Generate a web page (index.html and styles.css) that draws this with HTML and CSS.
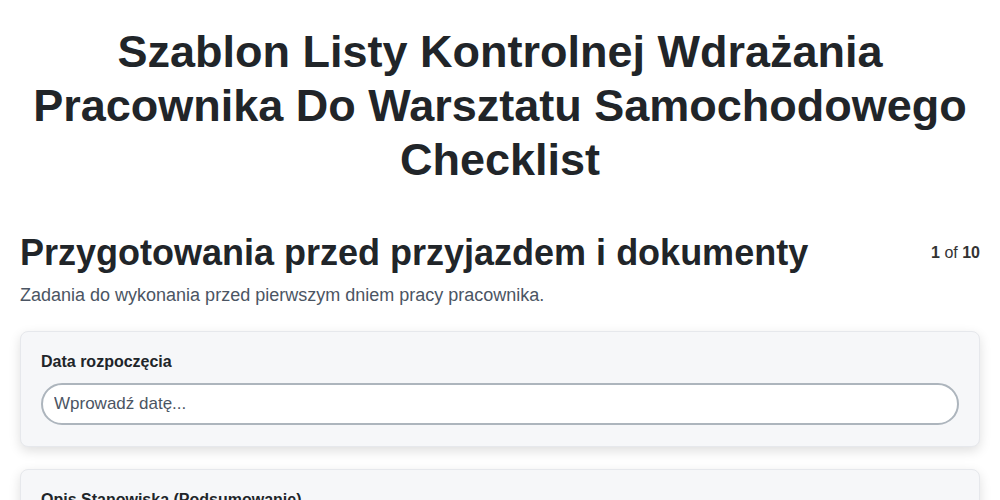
FILE: index.html
```html
<!DOCTYPE html>
<html lang="pl">
<head>
  <meta charset="UTF-8">
  <meta name="viewport" content="width=device-width, initial-scale=1.0">
  <title>Szablon Listy Kontrolnej</title>
  <link rel="stylesheet" href="styles.css">
</head>
<body>
  <div id="page">
    <h1 id="title">Szablon Listy Kontrolnej Wdrażania Pracownika Do Warsztatu Samochodowego Checklist</h1>

    <div class="section-head">
      <h2>Przygotowania przed przyjazdem i dokumenty</h2>
      <div class="counter"><b>1</b> of <b>10</b></div>
    </div>
    <p class="section-desc">Zadania do wykonania przed pierwszym dniem pracy pracownika.</p>

    <div class="card">
      <label class="field-label">Data rozpoczęcia</label>
      <input class="field-input" type="text" placeholder="Wprowadź datę...">
    </div>

    <div class="card">
      <label class="field-label">Opis Stanowiska (Podsumowanie)</label>
      <textarea class="field-input" placeholder="Wprowadź opis..."></textarea>
    </div>
  </div>
</body>
</html>
```

FILE: styles.css
```css
body {
    font-family: "Liberation Sans", Arial, sans-serif;
    margin: 0;
    padding: 0;
    background-color: #ffffff;
    color: #212529;
}

#page {
    padding: 0 20px 20px 20px;
}

#title {
    font-size: 45px;
    font-weight: bold;
    line-height: 54px;
    text-align: center;
    margin: 25px 10px 44px 10px;
}

.section-head {
    display: flex;
    align-items: center;
    justify-content: space-between;
}

.section-head h2 {
    font-size: 36px;
    font-weight: bold;
    margin: 0;
    line-height: 43px;
}

.counter {
    font-size: 16px;
    color: #333;
}

.section-desc {
    font-size: 18px;
    line-height: 21px;
    color: #4b5563;
    margin: 11px 0 25px 0;
}

.card {
    background-color: #f6f7f9;
    border: 1px solid #e6e8ec;
    border-radius: 8px;
    box-shadow: 0px 4px 12px rgba(0, 0, 0, 0.13);
    padding: 21px 20px 21px 20px;
    margin-bottom: 22px;
}

.field-label {
    display: block;
    font-size: 16px;
    line-height: 18px;
    font-weight: bold;
    margin-bottom: 12px;
}

.field-input {
    display: block;
    box-sizing: border-box;
    width: 100%;
    height: 42px;
    padding: 8px 11px;
    font-family: "Liberation Sans", Arial, sans-serif;
    font-size: 17px;
    border: 2px solid #adb5bd;
    border-radius: 21px;
    background-color: #ffffff;
    outline: none;
    resize: none;
}

.field-input::placeholder {
    color: #4b5563;
}
```
